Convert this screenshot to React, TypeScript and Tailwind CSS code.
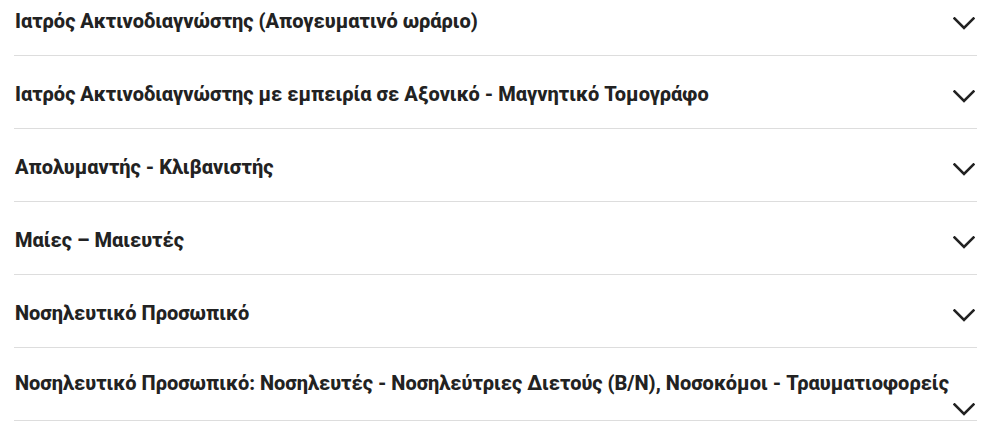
const items = [
  { title: "Ιατρός Ακτινοδιαγνώστης (Απογευματινό ωράριο)", last: false },
  { title: "Ιατρός Ακτινοδιαγνώστης με εμπειρία σε Αξονικό - Μαγνητικό Τομογράφο", last: false },
  { title: "Απολυμαντής - Κλιβανιστής", last: false },
  { title: "Μαίες – Μαιευτές", last: false },
  { title: "Νοσηλευτικό Προσωπικό", last: false },
  {
    title: "Νοσηλευτικό Προσωπικό: Νοσηλευτές - Νοσηλεύτριες Διετούς (Β/Ν), Νοσοκόμοι - Τραυματιοφορείς",
    last: true,
  },
];

function Chevron() {
  return (
    <svg width="22" height="13" viewBox="0 0 22 13" fill="none">
      <polyline
        points="1.5,1.5 11,11 20.5,1.5"
        stroke="#222222"
        strokeWidth="2.6"
        strokeLinecap="square"
      />
    </svg>
  );
}

export default function App() {
  return (
    <div className="h-[436px] w-[992px] overflow-hidden bg-white font-['Roboto','Liberation_Sans',sans-serif]">
      <div className="-mt-[17px] ml-[14px] w-[963px]">
        {items.map((item) => (
          <div
            key={item.title}
            className={
              item.last
                ? "flex h-[73px] flex-wrap items-start justify-between gap-x-4 border-b border-[#dddddd] pt-[22px]"
                : "flex h-[73px] flex-wrap items-start justify-between gap-x-4 border-b border-[#dddddd] pt-[25px]"
            }
          >
            <span className="pl-px text-[20px] font-extrabold leading-[26px] text-[#222222]">
              {item.title}
            </span>
            <span
              className={
                item.last
                  ? "ml-auto flex h-[26px] items-center pr-[2px]"
                  : "ml-auto mt-[2px] flex h-[26px] items-center pr-[2px]"
              }
            >
              <Chevron />
            </span>
          </div>
        ))}
      </div>
    </div>
  );
}
